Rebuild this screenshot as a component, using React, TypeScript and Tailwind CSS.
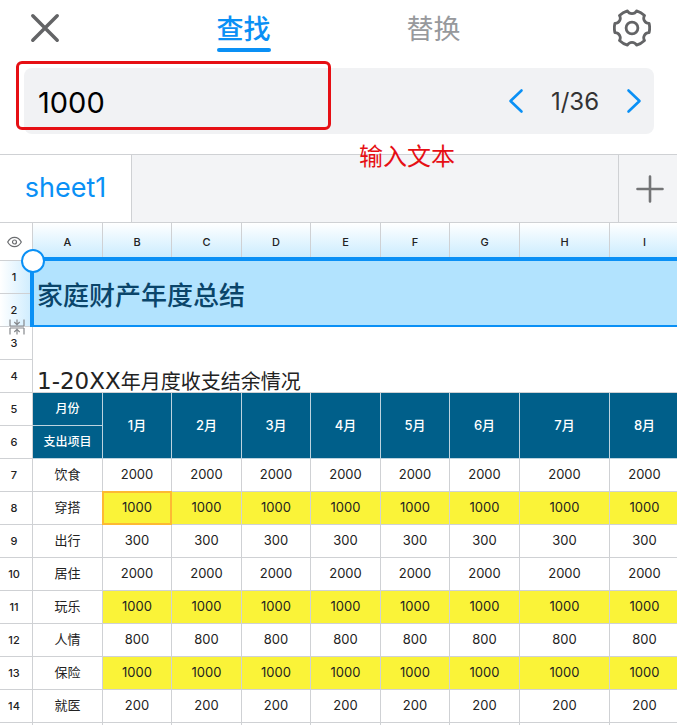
import { useState } from 'react';

interface BudgetRow {
  label: string;
  amount: number;
}

const COLUMNS = [
  { name: 'A', width: 70 },
  { name: 'B', width: 69 },
  { name: 'C', width: 70 },
  { name: 'D', width: 69 },
  { name: 'E', width: 70 },
  { name: 'F', width: 69 },
  { name: 'G', width: 70 },
  { name: 'H', width: 90 },
  { name: 'I', width: 70 }
];

const MONTHS = ['1月', '2月', '3月', '4月', '5月', '6月', '7月', '8月'];

const ROWS: BudgetRow[] = [
  { label: '饮食', amount: 2000 },
  { label: '穿搭', amount: 1000 },
  { label: '出行', amount: 300 },
  { label: '居住', amount: 2000 },
  { label: '玩乐', amount: 1000 },
  { label: '人情', amount: 800 },
  { label: '保险', amount: 1000 },
  { label: '就医', amount: 200 }
];

const CloseIcon = () => (
  <svg width="30" height="30" viewBox="0 0 30 30" fill="none" stroke="#636466" strokeWidth="3.5" strokeLinecap="round">
    <path d="M2.8 2.8 27.2 27.2M27.2 2.8 2.8 27.2" />
  </svg>
);

const GearIcon = () => (
  <svg width="38" height="38" viewBox="-19 -19 38 38" fill="none" stroke="#636466" strokeWidth="2.8" strokeLinejoin="round">
    <path d="M17.1-4.6Q18.2 0 17.1 4.6A5.2 5.2 0 0 0 12.5 12.5Q9.1 15.8 4.6 17.1A5.2 5.2 0 0 0-4.6 17.1Q-9.1 15.8-12.5 12.5A5.2 5.2 0 0 0-17.1 4.6Q-18.2 0-17.1-4.6A5.2 5.2 0 0 0-12.5-12.5Q-9.1-15.8-4.6-17.1A5.2 5.2 0 0 0 4.6-17.1Q9.1-15.8 12.5-12.5A5.2 5.2 0 0 0 17.1-4.6Z" />
    <circle r="5.9" />
  </svg>
);

const Chevron = ({ direction }: { direction: 'left' | 'right' }) => (
  <svg width="16" height="26" viewBox="0 0 16 26" fill="none" stroke="#0a90f5" strokeWidth="2.6" strokeLinecap="round" strokeLinejoin="round">
    <path d={direction === 'left' ? 'M13.5 2.5 2.5 13 13.5 23.5' : 'M2.5 2.5 13.5 13 2.5 23.5'} />
  </svg>
);

const PlusIcon = () => (
  <svg width="28" height="28" viewBox="0 0 28 28" fill="none" stroke="#737476" strokeWidth="2.6" strokeLinecap="round">
    <path d="M14 1.5V26.5M1.5 14H26.5" />
  </svg>
);

const EyeIcon = () => (
  <svg width="15" height="12" viewBox="0 0 15 12" fill="none" stroke="#6b6d70" strokeWidth="1.2">
    <path d="M.7 6C2.4 2.8 4.8 1.3 7.5 1.3S12.6 2.8 14.3 6C12.6 9.2 10.2 10.7 7.5 10.7S2.4 9.2.7 6Z" />
    <circle cx="7.5" cy="6" r="2" />
  </svg>
);

// Marks the collapsed row between 2 and 3
const CollapseIcon = () => (
  <svg width="16" height="16" viewBox="0 0 16 16" fill="none" stroke="#85888c" strokeWidth="1.2">
    <path d="M1 .5V7M15 .5V7M1 9V15.5M15 9V15.5M1 7H15M1 9H15M8 .5V5.5M5.3 3 8 5.7 10.7 3M8 15.5V10.5M5.3 13 8 10.3 10.7 13" />
  </svg>
);

const RowNumber = ({ n, selected = false }: { n?: number; selected?: boolean }) => (
  <th
    scope="row"
    className={`border-r border-b border-[#cfd1d4] pr-1 text-[11px] font-medium text-[#222] ${
      selected ? 'bg-linear-to-r from-white to-[#cdecfe]' : 'bg-white'
    }`}
  >
    {n}
  </th>
);

const App = () => {
  const [query, setQuery] = useState('1000');

  return (
    <div className="flex h-screen flex-col overflow-hidden bg-white font-[Inter,'Noto_Sans_CJK_SC',sans-serif] text-[#222]">
      <header className="flex h-[61px] shrink-0 items-start justify-between px-[25px] pt-2">
        <button aria-label="关闭" className="flex h-10 w-10 items-center justify-center">
          <CloseIcon />
        </button>
        <nav className="flex gap-[136px] pt-1 text-[27px] leading-9">
          <button className="font-medium text-[#0a90f5]">
            查找
            <span className="block h-1 rounded-full bg-[#0a90f5]" />
          </button>
          <button className="pb-1 text-[#97999c]">替换</button>
        </nav>
        <button aria-label="设置" className="flex h-10 w-10 items-center justify-center">
          <GearIcon />
        </button>
      </header>

      <div className="relative shrink-0 pt-[7px] pr-[23px] pb-5 pl-6">
        <div className="flex h-[66px] items-center rounded-lg bg-[#f1f2f4] pr-3">
          <input
            aria-label="查找内容"
            value={query}
            onChange={(e) => setQuery(e.target.value)}
            className="h-full min-w-0 flex-1 bg-transparent pt-0.5 pl-[14px] text-[29px] text-black outline-none"
          />
          <button aria-label="上一个"><Chevron direction="left" /></button>
          <span className="w-[102px] pt-0.5 text-center text-[24px] text-[#333]">1/36</span>
          <button aria-label="下一个"><Chevron direction="right" /></button>
        </div>
        <div className="pointer-events-none absolute top-0 left-4 h-[69px] w-[315px] rounded-md border-3 border-[#e60f14]" />
        <p className="absolute top-20 left-[359px] z-10 text-[24px] leading-8 text-[#e60f14]">输入文本</p>
      </div>

      <div className="flex h-[69px] shrink-0 border-y border-[#cfd1d4] bg-[#f3f4f6]">
        <button className="w-[132px] border-r border-[#cfd1d4] bg-white text-[27px] text-[#0a90f5]">sheet1</button>
        <div className="flex-1" />
        <button aria-label="新建工作表" className="flex w-[59px] items-center justify-center border-l border-[#cfd1d4] pl-1">
          <PlusIcon />
        </button>
      </div>

      <main className="min-h-0 flex-1 overflow-hidden">
        <table className="w-[680px] table-fixed border-separate border-spacing-0 text-center text-[13px]">
          <colgroup>
            <col className="w-[33px]" />
            {COLUMNS.map((c) => (
              <col key={c.name} style={{ width: c.width }} />
            ))}
          </colgroup>
          <thead>
            <tr className="h-[38px]">
              <th className="border-r border-b border-[#cfd1d4] pr-1">
                <span className="flex justify-center"><EyeIcon /></span>
              </th>
              {COLUMNS.map((c) => (
                <th
                  key={c.name}
                  scope="col"
                  className="border-r border-[#cfd1d4] bg-linear-to-b from-white to-[#c5eafe] text-[11px] font-medium"
                >
                  {c.name}
                </th>
              ))}
            </tr>
          </thead>
          <tbody>
            <tr className="h-[33px]">
              <RowNumber n={1} selected />
              <td colSpan={9} rowSpan={2} className="relative bg-[#b2e3fe] pt-1 pl-1 text-left text-[26px] leading-8 font-medium text-[#0a456a]">
                家庭财产年度总结
                {/* selection frame and its drag handle */}
                <span className="absolute -top-1 right-0 bottom-0 -left-[3px] border-t-4 border-b-2 border-l-4 border-[#0a90f5]" />
                <span className="absolute -top-3 -left-3 h-6 w-6 rounded-full border-2 border-[#0a90f5] bg-white" />
                <span className="absolute -bottom-2 -left-6"><CollapseIcon /></span>
              </td>
            </tr>
            <tr className="h-[33px]">
              <RowNumber n={2} selected />
            </tr>
            <tr className="h-[33px]">
              <RowNumber n={3} />
              <td colSpan={9} />
            </tr>
            <tr className="h-[33px]">
              <RowNumber n={4} />
              <td colSpan={9} className="border-b border-[#cfd1d4] pl-1 text-left align-bottom text-[20px] leading-5 whitespace-nowrap">
                <span className="font-['DejaVu_Sans'] text-[23px]">1-20XX</span>年月度收支结余情况
              </td>
            </tr>
            <tr className="h-[33px] bg-[#005f8a] text-white">
              <RowNumber n={5} />
              <th className="border-r border-b border-[#bdd3df] text-[12px] font-medium">月份</th>
              {MONTHS.map((m) => (
                <th key={m} rowSpan={2} scope="col" className="border-r border-b border-[#bdd3df] font-medium">
                  {m}
                </th>
              ))}
            </tr>
            <tr className="h-[33px] bg-[#005f8a] text-white">
              <RowNumber n={6} />
              <th className="border-r border-b border-[#bdd3df] text-[12px] font-medium">支出项目</th>
            </tr>
            {ROWS.map((row, i) => (
              <tr key={row.label} className="h-[33px]">
                <RowNumber n={i + 7} />
                <td className="border-r border-b border-[#cfd1d4]">{row.label}</td>
                {MONTHS.map((m, j) => {
                  const hit = String(row.amount) === query;
                  const current = hit && i === 1 && j === 0;
                  return (
                    <td key={m} className={`relative border-r border-b border-[#cfd1d4] ${hit ? 'bg-[#faf338]' : ''}`}>
                      {row.amount}
                      {current && <span className="absolute -inset-px border-2 border-[#fdb933]" />}
                    </td>
                  );
                })}
              </tr>
            ))}
            <tr className="h-[33px]">
              <RowNumber />
              {COLUMNS.map((c) => (
                <td key={c.name} className="border-r border-b border-[#cfd1d4]" />
              ))}
            </tr>
          </tbody>
        </table>
      </main>
    </div>
  );
};

export default App;
